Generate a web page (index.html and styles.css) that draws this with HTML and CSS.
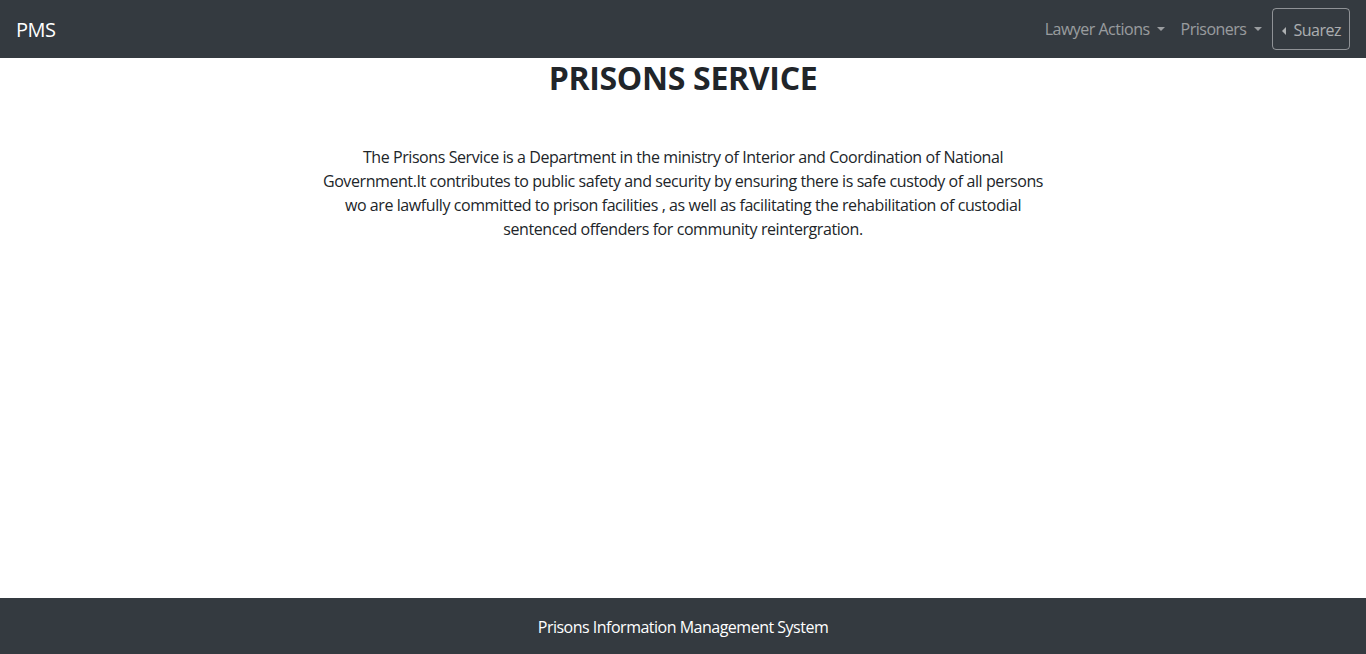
FILE: index.html
```html
<!DOCTYPE html>
<html lang="en">
<head>
<meta charset="utf-8">
<title>PMS</title>
<link rel="stylesheet" href="styles.css">
</head>
<body>
<div class="page">
  <nav class="navbar">
    <a class="brand" href="#">PMS</a>
    <div class="nav-right">
      <a class="nav-link" href="#">Lawyer Actions <span class="caret-down"></span></a>
      <a class="nav-link" href="#">Prisoners <span class="caret-down"></span></a>
      <button class="user-btn"><span class="caret-left"></span>Suarez</button>
    </div>
  </nav>
  <main class="content">
    <h2 class="title">PRISONS SERVICE</h2>
    <p class="intro">The Prisons Service is a Department in the ministry of Interior and Coordination of National Government.It contributes to public safety and security by ensuring there is safe custody of all persons wo are lawfully committed to prison facilities , as well as facilitating the rehabilitation of custodial sentenced offenders for community reintergration.</p>
  </main>
  <footer class="footer">Prisons Information Management System</footer>
</div>
</body>
</html>
```
FILE: styles.css
```css
* { box-sizing: border-box; }
html, body { margin: 0; padding: 0; height: 100%; }
body {
  font-family: "Open Sans", "Noto Sans", "Liberation Sans", sans-serif;
  font-size: 16px;
  line-height: 1.5;
  letter-spacing: -0.5px;
  color: #212529;
  background: #fff;
}
.page { display: flex; flex-direction: column; height: 654px; }
.navbar {
  height: 58px;
  background: #343a40;
  display: flex;
  align-items: center;
  justify-content: space-between;
  padding: 8px 16px;
}
.brand {
  color: #fff;
  font-size: 20px;
  text-decoration: none;
  margin-top: 2px;
}
.nav-right { display: flex; align-items: center; height: 42px; }
.nav-link {
  color: rgba(255,255,255,.5);
  text-decoration: none;
  padding: 8px 8px;
  display: flex;
  align-items: center;
}
.caret-down {
  display: inline-block;
  margin-left: 7px;
  width: 0; height: 0;
  border-top: 4.8px solid currentColor;
  border-left: 4.4px solid transparent;
  border-right: 4.4px solid transparent;
}
.user-btn {
  margin-left: 2px;
  height: 42px;
  padding: 2px 8px 0 9px;
  background: transparent;
  border: 1px solid rgba(255,255,255,.45);
  border-radius: 4px;
  color: rgba(255,255,255,.6);
  font: inherit;
  letter-spacing: inherit;
  display: flex;
  align-items: center;
}
.caret-left {
  display: inline-block;
  width: 0; height: 0;
  margin-right: 8px;
  margin-top: 1px;
  border-right: 4px solid currentColor;
  border-top: 4px solid transparent;
  border-bottom: 4px solid transparent;
}
.content { flex: 1; display: flex; flex-direction: column; align-items: center; }
.title {
  margin: 0;
  font-size: 32px;
  font-weight: 700;
  line-height: 1.2;
  letter-spacing: -0.3px;
  padding-top: 1px;
}
.intro {
  margin: 48px 0 0;
  width: 730px;
  text-align: center;
  letter-spacing: -0.42px;
}
.footer {
  height: 56px;
  background: #343a40;
  color: #fff;
  display: flex;
  align-items: center;
  justify-content: center;
  padding-top: 2px;
}
```
